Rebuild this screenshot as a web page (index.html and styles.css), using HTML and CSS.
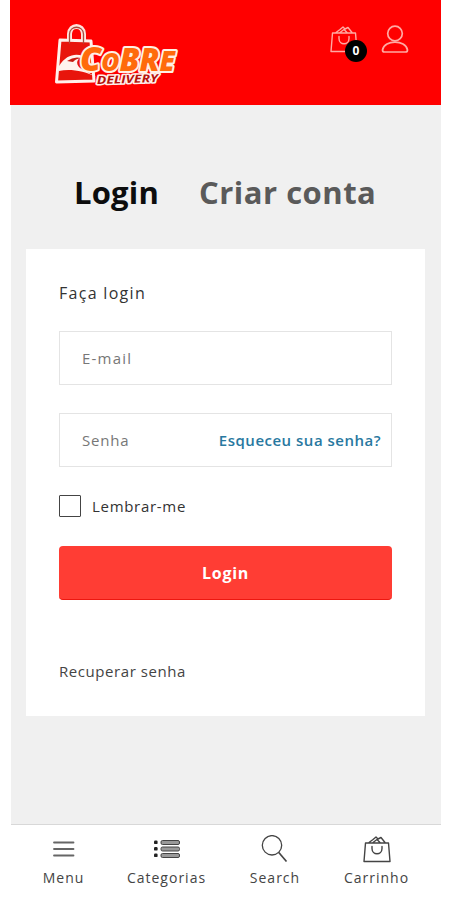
FILE: index.html
```
<!DOCTYPE html>
<html lang="pt-BR">
<head>
<meta charset="utf-8">
<title>Cobre Delivery - Login</title>
<link rel="stylesheet" href="styles.css">
</head>
<body>
<div class="app">
  <header class="header">
    <a class="brand" aria-label="Cobre Delivery">
      <svg width="130" height="68" viewBox="0 0 130 68">
        <g fill="none" stroke-linejoin="round" stroke-linecap="round">
          <path d="M17.500 24V13C18 3 31 3 31.500 13V24" stroke="#ffe3dc" stroke-width="5"/>
          <path d="M8 19L39 20L42 60L4.500 61Z" stroke="#fff0eb" stroke-width="3" fill="#e8150c"/>
          <path d="M17.500 22V13C18 4 31 4 31.500 13V22" stroke="#a84a3e" stroke-width="1.300"/>
        </g>
        <path d="M7 45C14 34 23 32 31 35C25 38 23 42 28 47L46 57C31 49 17 48 7 50Z" fill="#fff3ee"/>
        <path d="M15 40Q22 35 29 37Q23 38 21 41Z" fill="#c51a10"/>
        <text class="brand-name" x="28" y="49.500" textLength="95" lengthAdjust="spacingAndGlyphs"><tspan font-size="34">C</tspan><tspan font-size="25">O</tspan><tspan font-size="32">B</tspan><tspan font-size="31">R</tspan><tspan font-size="28">E</tspan></text>
        <text class="brand-sub" x="45" y="63" textLength="61" lengthAdjust="spacingAndGlyphs" transform="rotate(-2 46 61)">DELIVERY</text>
      </svg>
    </a>
    <div class="actions">
      <a class="bag">
        <svg width="28" height="28" viewBox="0 0 28 28"><use href="#bag"/></svg>
        <span class="badge">0</span>
      </a>
      <svg class="user" width="28" height="29" viewBox="0 0 28 29">
        <circle cx="14" cy="8.500" r="7.300"/>
        <path d="M1.500 25Q1.500 27 3.500 27H24.500Q26.500 27 26.500 25C24.500 14.500 3.500 14.500 1.500 25Z"/>
      </svg>
    </div>
  </header>

  <main class="main">
    <nav class="tabs">
      <a class="tab active">Login</a>
      <a class="tab other">Criar conta</a>
    </nav>
    <form class="card">
      <h2 class="title">Faça login</h2>
      <div class="field"><span class="hint email">E-mail</span></div>
      <div class="field"><span class="hint pass">Senha</span><a class="forgot">Esqueceu sua senha?</a></div>
      <label class="remember"><span class="box"></span><span class="remember-text">Lembrar-me</span></label>
      <div class="submit"><span>Login</span></div>
      <a class="recover">Recuperar senha</a>
    </form>
  </main>

  <footer class="bottom">
    <a class="item menu">
      <svg width="28" height="28" viewBox="0 0 28 28"><path d="M4 7.500H23.500M4 14H23.500M4 20.500H23.500" stroke="#666" stroke-width="1.800" stroke-linecap="round"/></svg>
      <span>Menu</span>
    </a>
    <a class="item categories">
      <svg width="28" height="28" viewBox="0 0 28 28">
        <g fill="#999" stroke="#444" stroke-width="1"><rect x="8" y="5.500" width="18.500" height="4" rx="1.500"/><rect x="8" y="12" width="18.500" height="4" rx="1.500"/><rect x="8" y="18.500" width="18.500" height="4" rx="1.500"/></g>
        <g fill="#222"><rect x="1" y="5.500" width="3.600" height="3.600" rx="1.200"/><rect x="1" y="12" width="3.600" height="3.600" rx="1.200"/><rect x="1" y="18.500" width="3.600" height="3.600" rx="1.200"/></g>
      </svg>
      <span>Categorias</span>
    </a>
    <a class="item search">
      <svg width="28" height="28" viewBox="0 0 28 28" fill="none" stroke="#444" stroke-width="1.300"><circle cx="11" cy="10.300" r="9.700"/><path d="M17.800 17.500L25.500 26.500" stroke-width="1.700"/></svg>
      <span>Search</span>
    </a>
    <a class="item cart">
      <svg width="28" height="28" viewBox="0 0 28 28"><g id="bag"><path class="bag-line" d="M2.500 8H25.500L27 26.500H1ZM9 11.500V13.500C9 20.500 19 20.500 19 13.500V11.500M6 7.500L10 4.500L13 2L15 4L18 2.500L22 7.500M10 7.500L14 4.500L17 7.500"/></g></svg>
      <span>Carrinho</span>
    </a>
  </footer>
</div>
</body>
</html>
```
FILE: styles.css
```
* { box-sizing: border-box; }
body { margin: 0; background: #fff; font-family: "Open Sans", sans-serif; color: #333; }
.app { width: 430px; height: 900px; margin-left: 11px; display: flex; flex-direction: column; }

.header { height: 105px; margin: 0 0 0 -1px; width: 431px; background: #f00; display: flex; justify-content: space-between; padding: 21px 32px 0 42px; }
.brand svg { display: block; overflow: visible; }
.brand-name { font-family: "Open Sans", sans-serif; font-weight: 800; font-style: italic; fill: #ff6b0b; stroke: #fff0e5; stroke-width: 4px; stroke-linejoin: round; paint-order: stroke; }
.brand-sub { font-family: "Open Sans", sans-serif; font-weight: 700; font-style: italic; font-size: 11px; fill: #b5120c; stroke: #fff0eb; stroke-width: 3px; stroke-linejoin: round; paint-order: stroke; }
.actions { display: flex; gap: 23px; padding-top: 4px; }
.bag { position: relative; width: 28px; height: 28px; color: #ffaaa3; }
.bag svg { display: block; }
.bag-line { fill: none; stroke: currentColor; stroke-width: 1.400px; stroke-linejoin: round; stroke-linecap: round; }
.badge { position: absolute; left: 15px; top: 15px; width: 22px; height: 22px; border-radius: 50%; background: #000; color: #fff; font-size: 12px; font-weight: 700; line-height: 22px; text-align: center; }
.user { fill: none; stroke: #ffaaa3; stroke-width: 1.700px; stroke-linejoin: round; }

.main { height: 719px; background: #f0f0f0; padding: 64px 15px 0; }
.tabs { display: flex; height: 80px; padding-left: 48px; gap: 39px; font-size: 31px; font-weight: 700; line-height: 46px; white-space: nowrap; }
.tab { color: #5a5a5a; letter-spacing: .5px; }
.tab.active { color: #0d0d0d; width: 86px; letter-spacing: .2px; }

.card { width: 399px; height: 467px; background: #fff; padding: 32px 33px 0; display: flex; flex-direction: column; align-items: stretch; }
.title { margin: 0 0 26px; font-size: 16px; line-height: 24px; font-weight: 400; letter-spacing: 1.300px; color: #333; }
.field { height: 54px; margin-bottom: 28px; border: 1.500px solid #e4e4e4; padding: 0 10px 0 22px; display: flex; align-items: center; justify-content: space-between; font-size: 15px; color: #777; white-space: nowrap; }
.email { letter-spacing: 1.200px; }
.pass { letter-spacing: .8px; }
.forgot { color: #2878a0; font-weight: 600; letter-spacing: .5px; }
.remember { display: flex; align-items: center; gap: 11px; height: 22px; font-size: 15px; letter-spacing: .7px; color: #333; margin-bottom: 29px; }
.box { width: 22px; height: 22px; border: 1.500px solid #444; border-radius: 1px; }
.submit { height: 54px; border-radius: 4px; background: #ff3d34; border-bottom: 1px solid #ed1710; color: #fff; font-size: 16px; font-weight: 700; letter-spacing: .7px; display: flex; align-items: center; justify-content: center; }
.recover { margin-top: 60px; font-size: 15px; line-height: 22px; letter-spacing: .57px; color: #444; }

.bottom { height: 76px; border-top: 1.500px solid #d8d8d8; display: grid; grid-template-columns: 105px 101px 116px 87px; color: #444; font-size: 14px; padding-top: 10px; }
.item { display: flex; flex-direction: column; align-items: center; gap: 5px; line-height: 20px; letter-spacing: 1px; white-space: nowrap; }
.item svg { display: block; }
```
